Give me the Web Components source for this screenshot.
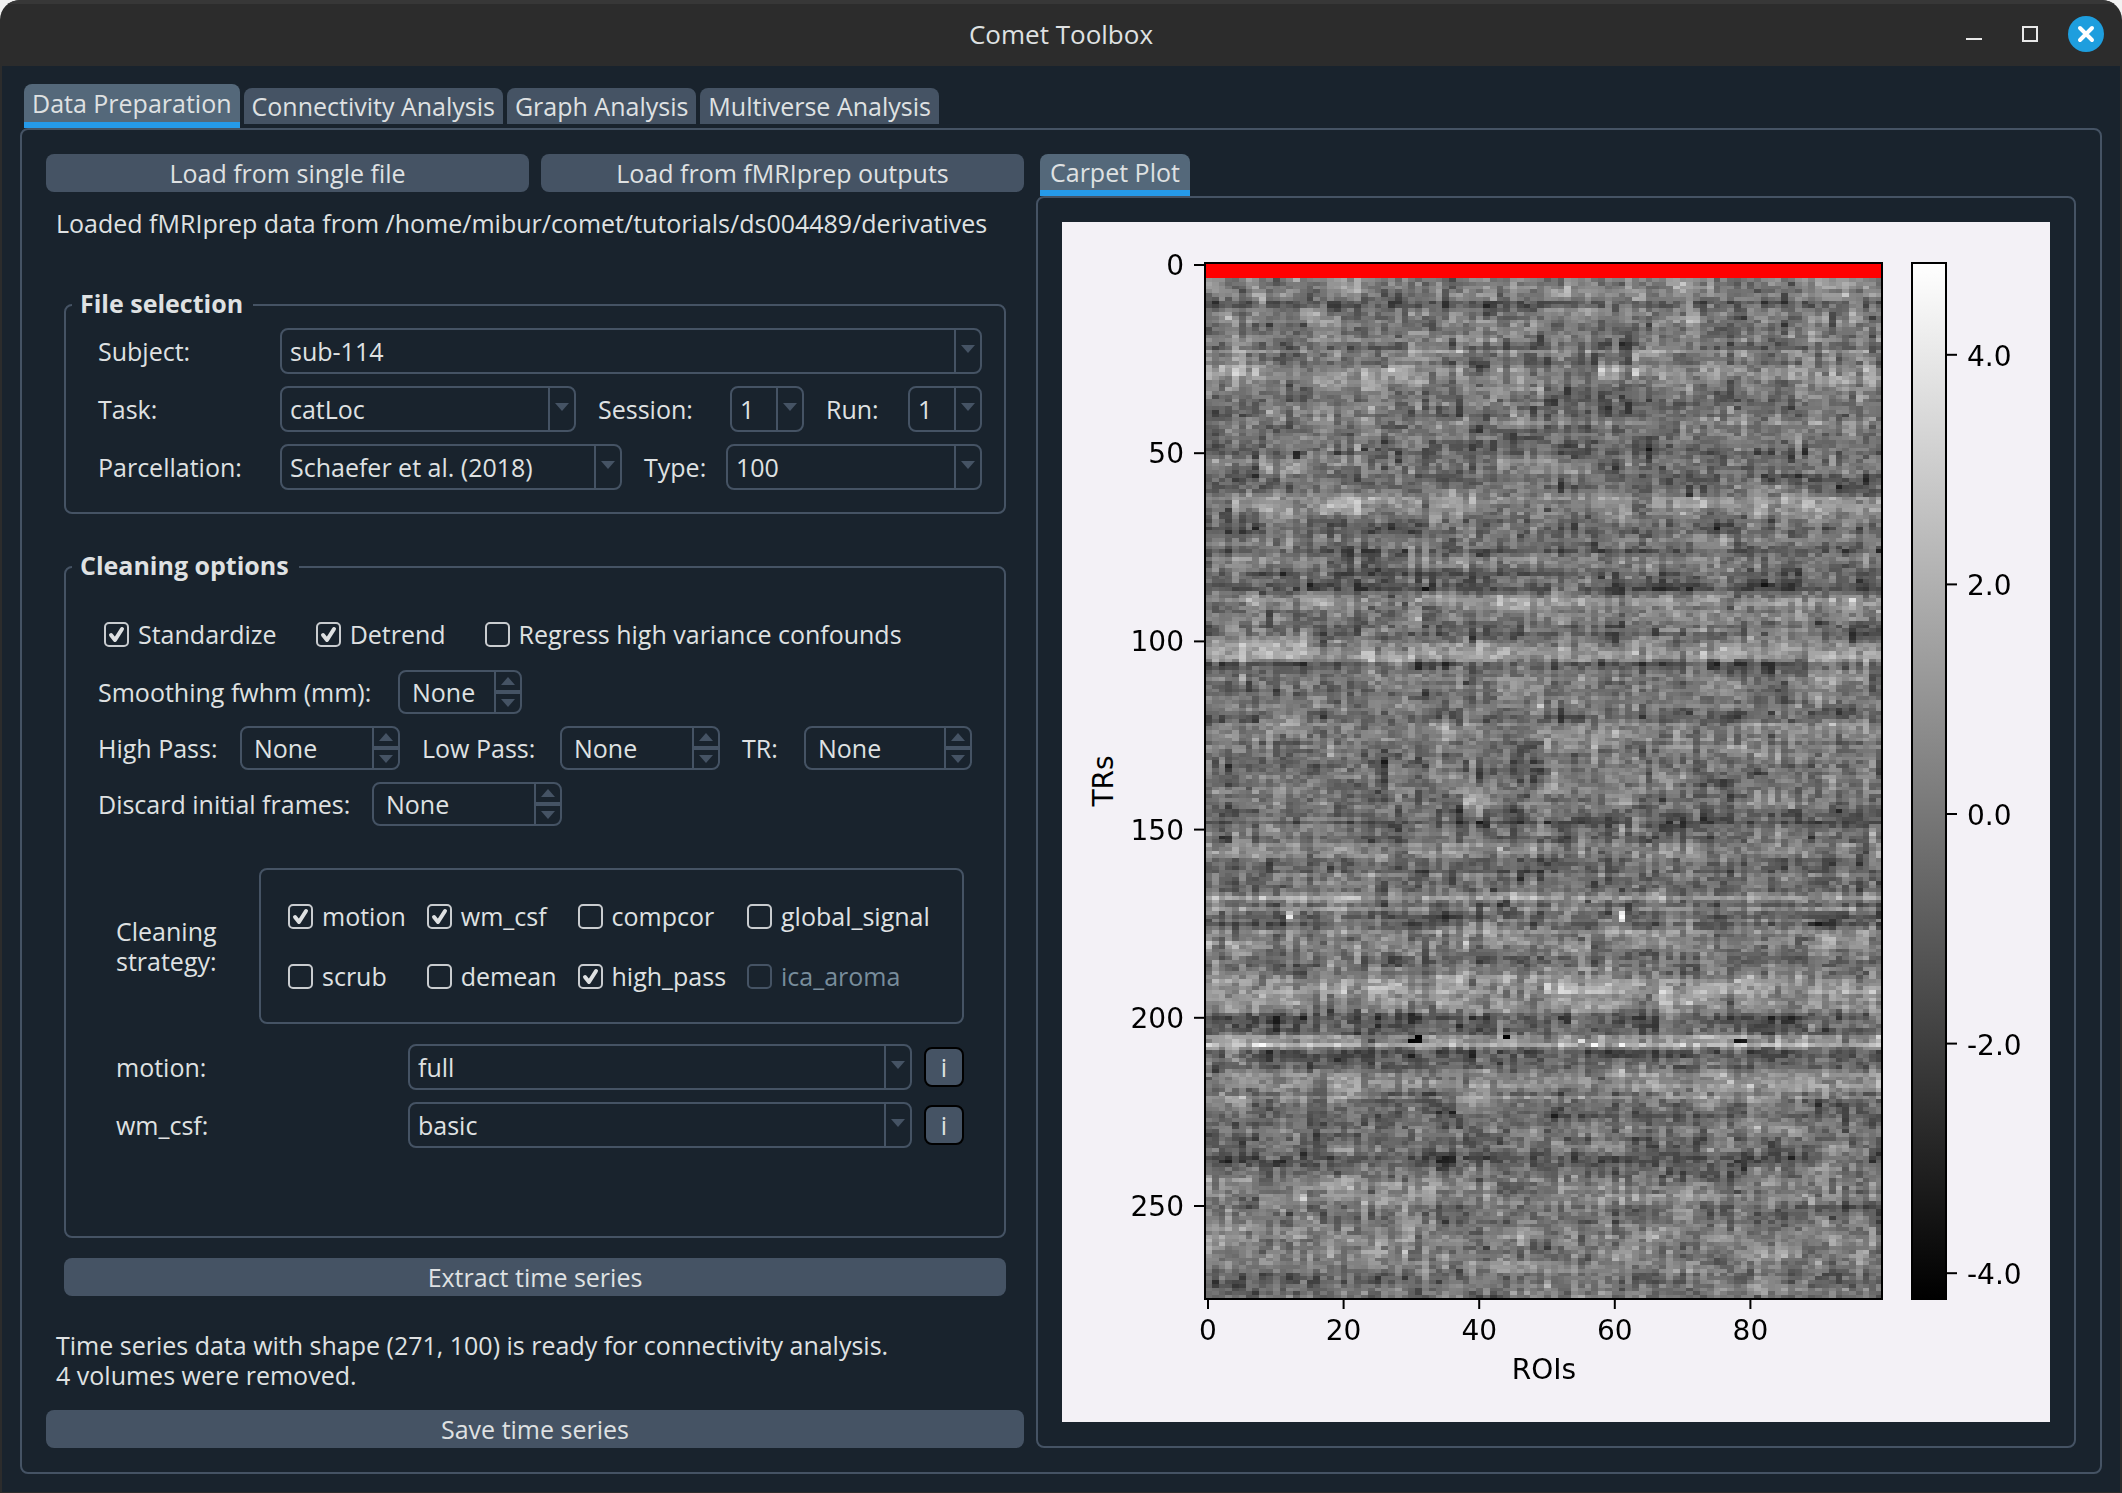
<!DOCTYPE html>
<html lang="en">
<head>
<meta charset="utf-8">
<title>Comet Toolbox</title>
<style>
  body {
    margin: 0;
    background: #f2f2f2;
    color: #dfe1e2;
    font: 25px/30px "Open Sans", "Noto Sans", sans-serif;
    --bg: #19232d;
    --line: #455364;
    --tab: #54687a;
    --accent: #259ae9;
    --text: #dfe1e2;
  }
  .columns {
    flex: 1;
    display: grid;
    grid-template-columns: 978fr 1040fr;
    gap: 12px;
  }
  .left, .right {
    display: flex;
    flex-direction: column;
    min-width: 0;
  }
  .buttons {
    display: flex;
    gap: 12px;
  }
  .buttons tool-button { flex: 1; }
  .message {
    margin: 16px 10px 0;
  }
  .left > group-box { margin: 52px 18px 0; }
  .left > group-box.grow { margin-top: 38px; flex: 1; }
  .row {
    display: flex;
    gap: 22px;
  }
  .files {
    display: grid;
    gap: 12px;
    padding: 8px 22px 22px 32px;
  }
  .cleaning {
    padding: 37px 22px 20px 32px;
  }
  .cleaning > .row { margin-bottom: 12px; }
  .cleaning > .checks {
    gap: 39px;
    padding-left: 6px;
    margin-bottom: 21px;
  }
  .strategy {
    display: flex;
    align-items: center;
    padding: 0 18px;
    margin: 42px 0 20px;
  }
  .strategy p {
    flex: none;
    width: 143px;
    margin: 0;
  }
  .strategy-box {
    flex: 1;
    display: grid;
    grid-template-columns: repeat(4, max-content);
    gap: 30px 21px;
    padding: 31px 27px;
    border: 2px solid var(--line);
    border-radius: 8px;
  }
  .option {
    display: flex;
    align-items: center;
    gap: 12px;
    padding: 0 18px;
    margin-bottom: 12px;
  }
  .grow-item { flex: 1; }
  .extract { margin: 20px 18px 34px; }
  .summary { margin: 0 10px 20px; }
</style>
</head>
<body>
<app-window heading="Comet Toolbox">
  <tab-panel tabs="Data Preparation|Connectivity Analysis|Graph Analysis|Multiverse Analysis">
    <div class="columns">
      <div class="left">
        <div class="buttons">
          <tool-button>Load from single file</tool-button>
          <tool-button>Load from fMRIprep outputs</tool-button>
        </div>
        <p class="message">Loaded fMRIprep data from /home/mibur/comet/tutorials/ds004489/derivatives</p>

        <group-box heading="File selection">
          <div class="files">
            <combo-box label="Subject:" value="sub-114" style="--label: 182px"></combo-box>
            <div class="row">
              <combo-box class="grow-item" label="Task:" value="catLoc" style="--label: 182px"></combo-box>
              <combo-box label="Session:" value="1" style="--label: 132px; --control: 74px"></combo-box>
              <combo-box label="Run:" value="1" style="--label: 82px; --control: 74px"></combo-box>
            </div>
            <div class="row">
              <combo-box class="grow-item" label="Parcellation:" value="Schaefer et al. (2018)" style="--label: 182px"></combo-box>
              <combo-box label="Type:" value="100" style="--label: 82px; --control: 256px"></combo-box>
            </div>
          </div>
        </group-box>

        <group-box class="grow" heading="Cleaning options">
          <div class="cleaning">
            <div class="row checks">
              <check-box label="Standardize" checked></check-box>
              <check-box label="Detrend" checked></check-box>
              <check-box label="Regress high variance confounds"></check-box>
            </div>
            <div class="row">
              <spin-box label="Smoothing fwhm (mm):" style="--label: 300px; --control: 124px"></spin-box>
            </div>
            <div class="row">
              <spin-box label="High Pass:" style="--label: 142px; --control: 160px"></spin-box>
              <spin-box label="Low Pass:" style="--label: 138px; --control: 160px"></spin-box>
              <spin-box label="TR:" style="--label: 62px; --control: 168px"></spin-box>
            </div>
            <div class="row">
              <spin-box label="Discard initial frames:" style="--label: 274px; --control: 190px"></spin-box>
            </div>
            <div class="strategy">
              <p>Cleaning<br>strategy:</p>
              <div class="strategy-box">
                <check-box label="motion" checked></check-box>
                <check-box label="wm_csf" checked></check-box>
                <check-box label="compcor"></check-box>
                <check-box label="global_signal"></check-box>
                <check-box label="scrub"></check-box>
                <check-box label="demean"></check-box>
                <check-box label="high_pass" checked></check-box>
                <check-box label="ica_aroma" disabled></check-box>
              </div>
            </div>
            <div class="option">
              <combo-box class="grow-item" label="motion:" value="full" style="--label: 292px"></combo-box>
              <tool-button info>i</tool-button>
            </div>
            <div class="option">
              <combo-box class="grow-item" label="wm_csf:" value="basic" style="--label: 292px"></combo-box>
              <tool-button info>i</tool-button>
            </div>
          </div>
        </group-box>

        <tool-button class="extract">Extract time series</tool-button>
        <p class="summary">Time series data with shape (271, 100) is ready for connectivity analysis.<br>4 volumes were removed.</p>
        <tool-button>Save time series</tool-button>
      </div>

      <div class="right">
        <tab-panel tabs="Carpet Plot" compact>
          <carpet-plot></carpet-plot>
        </tab-panel>
      </div>
    </div>
  </tab-panel>
</app-window>

<script>
class AppWindow extends HTMLElement {
  constructor() {
    super();
    this.attachShadow({ mode: 'open' });
  }

  connectedCallback() {
    this.shadowRoot.innerHTML = `
      <style>
        :host {
          display: flex;
          flex-direction: column;
          box-sizing: border-box;
          min-height: 100vh;
          border-radius: 20px 20px 0 0;
          background: #2c2c2c;
          overflow: hidden;
        }
        header {
          display: grid;
          grid-template-columns: 1fr auto 1fr;
          align-items: center;
          height: 66px;
          padding: 0 18px 2px;
          box-sizing: border-box;
          border-top: 4px solid #373737;
        }
        h1 {
          grid-column: 2;
          margin: 0;
          font-size: 26px;
          font-weight: 500;
        }
        nav {
          display: flex;
          justify-content: flex-end;
          gap: 20px;
        }
        button {
          width: 36px;
          height: 36px;
          padding: 0;
          border: 0;
          background: none;
        }
        svg { display: block; }
        main {
          flex: 1;
          display: flex;
          margin: 0 2px 1px;
          padding: 18px 18px 18px;
          background: var(--bg);
        }
      </style>
      <header>
        <h1>${this.getAttribute('heading')}</h1>
        <nav>
          <button aria-label="Minimize"><svg width="36" height="36"><path d="M10 23h16" stroke="#e8e8e8" stroke-width="2"/></svg></button>
          <button aria-label="Maximize"><svg width="36" height="36"><path d="M11 11h14v14h-14z" fill="none" stroke="#e8e8e8" stroke-width="2"/></svg></button>
          <button aria-label="Close"><svg width="36" height="36"><circle cx="18" cy="18" r="18" fill="#1e9ede"/><path d="M12 12l12 12M24 12l-12 12" stroke="#fff" stroke-width="4" stroke-linecap="round"/></svg></button>
        </nav>
      </header>
      <main><slot></slot></main>
    `;
  }
}

class TabPanel extends HTMLElement {
  constructor() {
    super();
    this.attachShadow({ mode: 'open' });
  }

  connectedCallback() {
    const tabs = this.getAttribute('tabs').split('|');
    this.shadowRoot.innerHTML = `
      <style>
        :host {
          flex: 1;
          display: flex;
          flex-direction: column;
          min-width: 0;
        }
        .tabs {
          display: flex;
          align-items: flex-end;
          gap: 4px;
          padding-left: 4px;
        }
        button {
          height: 36px;
          margin-bottom: 4px;
          padding: 0 8px;
          border: 0;
          border-radius: 8px 8px 0 0;
          background: var(--line);
          color: inherit;
          font: inherit;
        }
        button[aria-selected="true"] {
          height: 44px;
          margin: 0;
          border-bottom: 6px solid var(--accent);
          background: var(--tab);
        }
        :host([compact]) button {
          height: 42px;
          padding: 0 10px;
        }
        .panel {
          flex: 1;
          display: flex;
          padding: 24px;
          border: 2px solid var(--line);
          border-radius: 8px;
        }
      </style>
      <div class="tabs" role="tablist">
        ${tabs.map((tab, i) => `<button role="tab" aria-selected="${i === 0}">${tab}</button>`).join('')}
      </div>
      <div class="panel" role="tabpanel"><slot></slot></div>
    `;
  }
}

class ToolButton extends HTMLElement {
  constructor() {
    super();
    this.attachShadow({ mode: 'open' });
    this.shadowRoot.innerHTML = `
      <style>
        :host { display: block; }
        button {
          display: block;
          width: 100%;
          height: 38px;
          padding: 0;
          border: 0;
          border-radius: 8px;
          background: var(--line);
          color: inherit;
          font: inherit;
        }
        :host([info]) button {
          width: 40px;
          height: 40px;
          border: 2px solid #000;
        }
      </style>
      <button><slot></slot></button>
    `;
  }
}

class GroupBox extends HTMLElement {
  constructor() {
    super();
    this.attachShadow({ mode: 'open' });
  }

  connectedCallback() {
    this.shadowRoot.innerHTML = `
      <style>
        :host { display: flex; }
        fieldset {
          flex: 1;
          min-width: 0;
          margin: 0;
          padding: 0;
          border: 2px solid var(--line);
          border-radius: 8px;
        }
        legend {
          height: 30px;
          margin-left: 6px;
          padding: 0 10px 0 8px;
          font-weight: 700;
          line-height: 26px;
        }
      </style>
      <fieldset>
        <legend>${this.getAttribute('heading')}</legend>
        <slot></slot>
      </fieldset>
    `;
  }
}

class ComboBox extends HTMLElement {
  constructor() {
    super();
    this.attachShadow({ mode: 'open' });
  }

  connectedCallback() {
    this.shadowRoot.innerHTML = `
      <style>
        :host {
          display: flex;
          align-items: center;
          min-width: 0;
        }
        label { width: var(--label); flex: none; }
        .box {
          flex: 1 0 var(--control, 0);
          display: grid;
          grid-template-columns: 1fr 26px;
          height: 46px;
          box-sizing: border-box;
          border: 2px solid var(--line);
          border-radius: 8px;
        }
        select {
          grid-area: 1 / 1 / 2 / 3;
          appearance: none;
          width: 100%;
          min-width: 0;
          padding: 0 8px;
          border: 0;
          background: none;
          color: inherit;
          font: inherit;
        }
        option { background: #19232d; }
        .arrow {
          grid-area: 1 / 2;
          display: grid;
          place-items: center;
          border-left: 2px solid var(--line);
          pointer-events: none;
        }
      </style>
      <label for="control">${this.getAttribute('label')}</label>
      <div class="box">
        <select id="control"><option>${this.getAttribute('value')}</option></select>
        <span class="arrow"><svg width="14" height="12"><path d="M0 0h14l-7 8z" fill="#455364"/></svg></span>
      </div>
    `;
  }
}

class SpinBox extends HTMLElement {
  constructor() {
    super();
    this.attachShadow({ mode: 'open' });
  }

  connectedCallback() {
    this.shadowRoot.innerHTML = `
      <style>
        :host {
          display: flex;
          align-items: center;
        }
        label { width: var(--label); }
        .box {
          width: var(--control);
          height: 44px;
          display: flex;
          box-sizing: border-box;
          border: 2px solid var(--line);
          border-radius: 8px;
        }
        input {
          flex: 1;
          min-width: 0;
          padding: 0 0 0 12px;
          border: 0;
          background: none;
          color: inherit;
          font: inherit;
        }
        .steps {
          width: 24px;
          display: flex;
          flex-direction: column;
          border-left: 2px solid var(--line);
        }
        button {
          flex: 1;
          display: grid;
          place-items: center;
          padding: 0;
          border: 0;
          background: none;
        }
        button + button { border-top: 4px solid var(--line); }
      </style>
      <label for="control">${this.getAttribute('label')}</label>
      <div class="box">
        <input id="control" value="None">
        <span class="steps">
          <button aria-label="Increase"><svg width="14" height="8"><path d="M0 8h14l-7 -8z" fill="#455364"/></svg></button>
          <button aria-label="Decrease"><svg width="14" height="8"><path d="M0 0h14l-7 8z" fill="#455364"/></svg></button>
        </span>
      </div>
    `;
  }
}

class CheckBox extends HTMLElement {
  constructor() {
    super();
    this.attachShadow({ mode: 'open' });
  }

  connectedCallback() {
    const checked = this.hasAttribute('checked') ? 'checked' : '';
    const disabled = this.hasAttribute('disabled') ? 'disabled' : '';
    this.shadowRoot.innerHTML = `
      <style>
        :host { display: block; }
        :host([disabled]) { color: #788d9c; }
        label {
          display: grid;
          grid-template-columns: 25px auto;
          column-gap: 9px;
          align-items: center;
        }
        input {
          grid-area: 1 / 1;
          appearance: none;
          width: 25px;
          height: 25px;
          margin: 0;
          border: 2px solid #c9cccf;
          border-radius: 5px;
        }
        input:disabled { border-color: var(--line); }
        svg {
          grid-area: 1 / 1;
          visibility: hidden;
          pointer-events: none;
        }
        input:checked + svg { visibility: visible; }
      </style>
      <label>
        <input type="checkbox" ${checked} ${disabled}>
        <svg width="25" height="25"><path d="M7 13l4 5 7 -11" fill="none" stroke="#dfe1e2" stroke-width="4" stroke-linecap="round" stroke-linejoin="round"/></svg>
        ${this.getAttribute('label')}
      </label>
    `;
  }
}

// Mean signal per TR, as [TR, value] knots; rows between knots are interpolated.
const ROW_SIGNAL = [
  [0, 0], [4, .3], [7, 0], [9, -.1], [10, -.8], [11, -1], [12, -.3], [15, .3], [18, -.3], [20, .2], [22, -.8],
  [23, .4], [24, -.1], [26, -.4], [28, .7], [30, .7], [32, .3], [35, -.3], [40, -.4], [42, .5], [44, -.3],
  [48, -.3], [51, -.5], [53, .2], [55, -.1], [56, -.8], [59, -.4], [62, .5], [64, .6], [66, .2], [69, -.3],
  [71, -1], [73, .1], [75, -.2], [76, -.9], [78, .5], [80, -.2], [82, -.7], [84, -.5], [86, -1.4], [87, -.3],
  [89, .9], [90, .8], [92, .2], [94, .1], [96, -.5], [98, -.6], [99, -.4], [101, .6], [104, 1], [105, .2],
  [106, -1.1], [108, -.6], [110, .2], [114, -.3], [117, .2], [119, -.3], [121, -.9], [122, 0], [124, .2],
  [130, -.2], [135, -.3], [139, 0], [141, -.2], [143, .3], [145, -.5], [147, -.6], [148, -1.3], [149, -.4],
  [150, 0], [152, -.8], [154, .3], [156, .7], [158, -.6], [161, -1], [162, -.2], [165, -.4], [166, -.5],
  [167, .1], [168, 1.3], [169, 0], [170, -.5], [171, .5], [172, -.4], [173, -1], [174, -.4], [175, -1],
  [177, .5], [180, .3], [183, -.2], [185, -.7], [188, 0], [190, .8], [193, .9], [196, .6], [198, .1],
  [200, -1], [203, -.9], [205, .5], [206, 1], [207, 2.2], [208, .3], [209, -1], [211, -.6], [213, -.6],
  [215, .7], [218, .8], [220, 0], [221, .8], [223, -.4], [228, -.5], [230, .3], [232, -.6], [235, 0],
  [237, -1.1], [239, -.7], [241, -.2], [245, .6], [246, 0], [247, .8], [249, .1], [251, -.3], [255, -.1],
  [257, .3], [261, .2], [265, .1], [267, 0], [268, -.5], [271, -.3], [274, 0]
];

// First ROI of each parcellation network.
const NETWORKS = [0, 8, 15, 18, 23, 30, 34, 38, 43, 50, 58, 63, 67, 73, 78, 80, 89, 98];

// Single strong samples: ROI, TR, grey level.
const PEAKS = [
  [12, 172, 190], [12, 173, 235], [61, 172, 235], [61, 173, 250], [61, 174, 220],
  [30, 206, 4], [31, 205, 2], [31, 206, 8], [44, 205, 2], [78, 206, 20], [79, 206, 24],
  [7, 207, 235], [8, 207, 250], [55, 206, 225], [57, 207, 250], [61, 207, 245],
  [13, 50, 38], [13, 51, 42], [63, 28, 205], [63, 29, 215], [82, 85, 20], [32, 86, 20]
];

class CarpetPlot extends HTMLElement {
  constructor() {
    super();
    this.attachShadow({ mode: 'open' });
  }

  connectedCallback() {
    const yTicks = [0, 50, 100, 150, 200, 250].map((value) => {
      const y = 43 + value * 3.764;
      return `<path d="M132 ${y}h10"/><text x="122" y="${y + 10}" text-anchor="end">${value}</text>`;
    });
    const xTicks = [0, 20, 40, 60, 80].map((value) => {
      const x = 146 + value * 6.78;
      return `<path d="M${x} 1078v9"/><text x="${x}" y="1118" text-anchor="middle">${value}</text>`;
    });
    const barTicks = [4, 2, 0, -2, -4].map((value) => {
      const y = 592 - value * 114.8;
      return `<path d="M885 ${y}h10"/><text x="905" y="${y + 11}">${value.toFixed(1)}</text>`;
    });
    this.shadowRoot.innerHTML = `
      <style>
        :host {
          flex: 1;
          display: flex;
          min-width: 0;
          background: #f3f1f6;
        }
        svg { width: 100%; }
        path, rect { fill: none; stroke: #000; stroke-width: 2; }
        text { font: 28px "DejaVu Sans", sans-serif; fill: #000; }
        canvas {
          display: block;
          width: 678px;
          height: 1036px;
          image-rendering: pixelated;
        }
      </style>
      <svg viewBox="0 0 988 1200" role="img" aria-label="Carpet plot">
        <defs>
          <linearGradient id="grey" x1="0" y1="0" x2="0" y2="1">
            <stop offset="0" stop-color="#fff"/>
            <stop offset="1" stop-color="#000"/>
          </linearGradient>
        </defs>
        <foreignObject x="143" y="41" width="678" height="1036"><canvas width="100" height="275"></canvas></foreignObject>
        <rect x="143" y="41" width="677" height="1036"/>
        <rect x="850" y="41" width="34" height="1036" style="fill: url(#grey)"/>
        ${yTicks.join('')}
        ${xTicks.join('')}
        ${barTicks.join('')}
        <text x="482" y="1157" text-anchor="middle">ROIs</text>
        <text transform="translate(51 559) rotate(-90)" text-anchor="middle">TRs</text>
      </svg>
    `;
    this.draw(this.shadowRoot.querySelector('canvas').getContext('2d'));
  }

  draw(ctx) {
    let seed = 114;
    const random = () => {
      seed = (seed * 1664525 + 1013904223) % 4294967296;
      return seed / 4294967296;
    };
    const noise = () => (random() + random() + random() + random() - 2) * 1.73;

    const networks = NETWORKS.map(() => 0);
    const regions = new Array(100).fill(0);
    const image = ctx.createImageData(100, 275);
    let knot = 0;
    for (let tr = 0; tr < 275; tr++) {
      while (knot < ROW_SIGNAL.length - 2 && ROW_SIGNAL[knot + 1][0] <= tr) knot++;
      const [t0, v0] = ROW_SIGNAL[knot];
      const [t1, v1] = ROW_SIGNAL[knot + 1];
      const row = v0 + (v1 - v0) * (tr - t0) / (t1 - t0);
      const jitter = noise() * 0.15;
      networks.forEach((value, i) => {
        networks[i] = value * 0.65 + noise() * 0.3;
      });
      let network = 0;
      for (let roi = 0; roi < 100; roi++) {
        while (NETWORKS[network + 1] <= roi) network++;
        regions[roi] = regions[roi] * 0.65 + noise() * 0.5;
        const value = row * 1.15 + jitter + networks[network] + regions[roi] + noise() * 0.35;
        const grey = 121 + value * 27;
        const i = (tr * 100 + roi) * 4;
        image.data[i] = tr < 4 ? 255 : grey;
        image.data[i + 1] = tr < 4 ? 0 : grey;
        image.data[i + 2] = tr < 4 ? 0 : grey;
        image.data[i + 3] = 255;
      }
    }
    PEAKS.forEach(([roi, tr, grey]) => {
      image.data.fill(grey, (tr * 100 + roi) * 4, (tr * 100 + roi) * 4 + 3);
    });
    ctx.putImageData(image, 0, 0);
  }
}

customElements.define('app-window', AppWindow);
customElements.define('tab-panel', TabPanel);
customElements.define('tool-button', ToolButton);
customElements.define('group-box', GroupBox);
customElements.define('combo-box', ComboBox);
customElements.define('spin-box', SpinBox);
customElements.define('check-box', CheckBox);
customElements.define('carpet-plot', CarpetPlot);
</script>
</body>
</html>
